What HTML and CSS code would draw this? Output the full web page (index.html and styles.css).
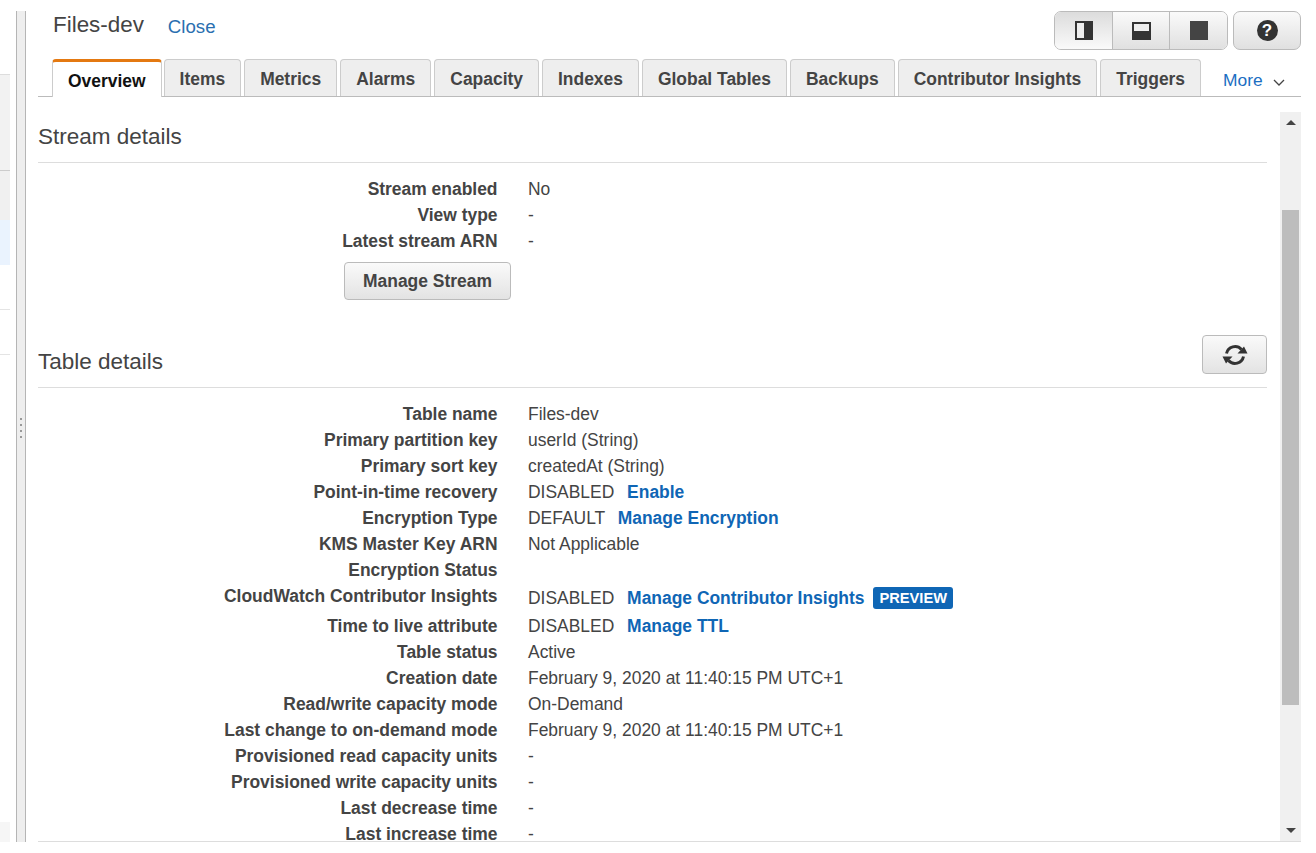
FILE: index.html
```html
<!DOCTYPE html>
<html lang="en">
<head>
  <meta charset="UTF-8" />
  <meta name="viewport" content="width=device-width, initial-scale=1" />
  <title>Files-dev</title>
  <link rel="stylesheet" href="styles.css">
</head>
<body>

<div class="page">
  <div class="sidebar">
    <div class="side-a"></div>
    <div class="side-b"></div>
    <div class="side-c"></div>
    <div class="side-d"></div>
    <div class="side-d"></div>
    <div class="side-e"></div>
  </div>

  <div class="splitter">
    <div class="grip"><i></i><i></i><i></i><i></i></div>
  </div>

  <div class="main">
    <div class="top">
      <div class="title">Files-dev</div>
      <a class="close">Close</a>
      <div class="top-btns">
        <div class="seg">
          <div class="seg-btn active">
            <svg width="18" height="19" viewBox="0 0 18 19"><rect width="18" height="19" fill="#333"/><rect x="2" y="2" width="7" height="15" fill="#eee"/></svg>
          </div>
          <div class="seg-btn">
            <svg width="19" height="18" viewBox="0 0 19 18"><rect width="19" height="18" fill="#333"/><rect x="2" y="2" width="15" height="7" fill="#eee"/></svg>
          </div>
          <div class="seg-btn">
            <svg width="18" height="19" viewBox="0 0 18 19"><rect width="18" height="19" fill="#444"/></svg>
          </div>
        </div>
        <div class="help-btn"><span class="help">?</span></div>
      </div>
    </div>

    <div class="tabs">
      <div class="tab active">Overview</div>
      <div class="tab">Items</div>
      <div class="tab">Metrics</div>
      <div class="tab">Alarms</div>
      <div class="tab">Capacity</div>
      <div class="tab">Indexes</div>
      <div class="tab">Global Tables</div>
      <div class="tab">Backups</div>
      <div class="tab">Contributor Insights</div>
      <div class="tab">Triggers</div>
      <div class="more">More
        <svg width="12" height="7" viewBox="0 0 12 7"><path d="M1 1l5 5 5-5" fill="none" stroke="#444" stroke-width="1.3"/></svg>
      </div>
    </div>

    <div class="body">
      <div class="content">
        <div class="section-head"><h2>Stream details</h2></div>
        <div class="rows">
          <div class="row"><div class="label">Stream enabled</div><div class="value">No</div></div>
          <div class="row"><div class="label">View type</div><div class="value">-</div></div>
          <div class="row"><div class="label">Latest stream ARN</div><div class="value">-</div></div>
        </div>
        <div class="btn-row"><div class="btn">Manage Stream</div></div>

        <div class="section-head table-head">
          <h2>Table details</h2>
          <div class="refresh">
            <svg width="26" height="26" viewBox="0 0 26 26">
              <path d="M4.500 11.500A8.700 8.700 0 0 1 19.500 7.500" fill="none" stroke="#333" stroke-width="3"/>
              <path d="M15.500 11.500h10l-3.500-7z" fill="#333"/>
              <path d="M21.500 14.500A8.700 8.700 0 0 1 6.500 18.500" fill="none" stroke="#333" stroke-width="3"/>
              <path d="M0.500 14.500h10l-6.500 7z" fill="#333"/>
            </svg>
          </div>
        </div>
        <div class="rows">
          <div class="row"><div class="label">Table name</div><div class="value">Files-dev</div></div>
          <div class="row"><div class="label">Primary partition key</div><div class="value">userId (String)</div></div>
          <div class="row"><div class="label">Primary sort key</div><div class="value">createdAt (String)</div></div>
          <div class="row"><div class="label">Point-in-time recovery</div><div class="value">DISABLED <a class="link">Enable</a></div></div>
          <div class="row"><div class="label">Encryption Type</div><div class="value">DEFAULT <a class="link">Manage Encryption</a></div></div>
          <div class="row"><div class="label">KMS Master Key ARN</div><div class="value">Not Applicable</div></div>
          <div class="row"><div class="label">Encryption Status</div><div class="value"></div></div>
          <div class="row tall"><div class="label">CloudWatch Contributor Insights</div><div class="value">DISABLED <a class="link">Manage Contributor Insights</a><span class="badge">PREVIEW</span></div></div>
          <div class="row"><div class="label">Time to live attribute</div><div class="value">DISABLED <a class="link">Manage TTL</a></div></div>
          <div class="row"><div class="label">Table status</div><div class="value">Active</div></div>
          <div class="row"><div class="label">Creation date</div><div class="value">February 9, 2020 at 11:40:15 PM UTC+1</div></div>
          <div class="row"><div class="label">Read/write capacity mode</div><div class="value">On-Demand</div></div>
          <div class="row"><div class="label">Last change to on-demand mode</div><div class="value">February 9, 2020 at 11:40:15 PM UTC+1</div></div>
          <div class="row"><div class="label">Provisioned read capacity units</div><div class="value">-</div></div>
          <div class="row"><div class="label">Provisioned write capacity units</div><div class="value">-</div></div>
          <div class="row"><div class="label">Last decrease time</div><div class="value">-</div></div>
          <div class="row"><div class="label">Last increase time</div><div class="value">-</div></div>
        </div>
      </div>

      <div class="scrollbar">
        <div class="arrow-up"></div>
        <div class="thumb"></div>
        <div class="arrow-down"></div>
      </div>
    </div>
  </div>
</div>

</body>
</html>
```

FILE: styles.css
```css
html, body {
  margin: 0;
  height: 100%;
  background: white;
  overflow: hidden;
}
body {
  font-family: "Liberation Sans", Arial, sans-serif;
  font-size: 16px;
  color: #444;
}
.page {
  display: flex;
  height: 853px;
}

/* what is left of the table list on the left */
.sidebar {
  width: 10px;
  margin-right: 6px;
  padding-top: 74px;
  box-sizing: border-box;
  display: flex;
  flex-direction: column;
  height: 842px;
}
.side-a {
  height: 96px;
  background: #f2f2f2;
  border-top: 1px solid #ddd;
  box-sizing: border-box;
}
.side-b {
  height: 50px;
  background: #f0f0f0;
  border-top: 1px solid #ccc;
  box-sizing: border-box;
}
.side-c {
  height: 45px;
  background: #eaf3fe;
}
.side-d {
  height: 45px;
  border-bottom: 1px solid #e4e4e4;
  box-sizing: border-box;
}
.side-e {
  height: 20px;
  margin-top: auto;
  background: #f6f6f6;
}

.splitter {
  width: 10px;
  box-sizing: border-box;
  margin-top: 11px;
  height: 831px;
  background: #eee;
  border-left: 1px solid #b5b5b5;
  border-right: 1px solid #b5b5b5;
  display: flex;
  align-items: center;
  justify-content: center;
}
.grip {
  display: flex;
  flex-direction: column;
  gap: 4px;
  margin-bottom: -2px;
}
.grip i {
  display: block;
  width: 2px;
  height: 2px;
  background: #999;
}

.main {
  width: 1275px;
  box-sizing: border-box;
  padding-left: 12px;
  display: flex;
  flex-direction: column;
  height: 842px;
}

.top {
  height: 59px;
  padding-left: 15px;
  display: flex;
  align-items: flex-start;
}
.title {
  font-size: 22.4px;
  line-height: 26px;
  margin-top: 12px;
  color: #444;
}
.close {
  font-size: 18.67px;
  line-height: 22px;
  margin-top: 16px;
  margin-left: 24px;
  color: #2a6fb0;
}
.top-btns {
  margin-left: auto;
  margin-top: 11px;
  display: flex;
  gap: 5px;
}
.seg {
  display: flex;
  border: 1px solid #bbb;
  border-radius: 7px;
  overflow: hidden;
}
.seg-btn {
  width: 57px;
  height: 37px;
  display: flex;
  align-items: center;
  justify-content: center;
  background: linear-gradient(#fafafa, #e0e0e0);
  border-left: 1px solid #bbb;
}
.seg-btn:first-child {
  border-left: none;
}
.seg-btn:nth-child(2) {
  width: 56px;
}
.seg-btn.active {
  background: linear-gradient(#dcdcdc, #fafafa);
}
.help-btn {
  width: 66px;
  height: 37px;
  border: 1px solid #bbb;
  border-radius: 7px;
  background: linear-gradient(#fafafa, #e0e0e0);
  display: flex;
  align-items: center;
  justify-content: center;
}
.help {
  width: 21px;
  height: 21px;
  border-radius: 50%;
  background: #333;
  color: white;
  font-weight: bold;
  font-size: 17px;
  line-height: 21px;
  text-align: center;
}

.tabs {
  display: flex;
  height: 38px;
  box-sizing: border-box;
  padding-left: 14px;
  border-bottom: 1px solid #bbb;
  gap: 3px;
}
.tab {
  padding: 0 15px;
  height: 37px;
  box-sizing: border-box;
  font-size: 17.45px;
  font-weight: bold;
  line-height: 38px;
  white-space: nowrap;
  color: #444;
  background: #eee;
  border: 1px solid #ccc;
  border-bottom: none;
  border-radius: 4px 4px 0 0;
}
.tab.active {
  height: 38px;
  background: white;
  color: #111;
  border-top: 3px solid #e47911;
  line-height: 38px;
  margin-right: -1px;
  position: relative;
  z-index: 1;
}
.more {
  margin-left: 19px;
  font-size: 17.4px;
  line-height: 42px;
  white-space: nowrap;
  color: #1b6ec2;
}
.more svg {
  margin-left: 5px;
}

.body {
  flex: 1;
  min-height: 0;
  margin-top: 15px;
  display: flex;
  border-bottom: 1px solid #ddd;
}
.content {
  flex: 1;
  min-width: 0;
  margin-right: 13px;
  overflow: hidden;
}
.section-head {
  display: flex;
  justify-content: space-between;
  align-items: flex-end;
  border-bottom: 1px solid #ddd;
  margin-top: 11px;
}
.section-head h2 {
  margin: 0 0 12px 0;
  font-size: 22.5px;
  line-height: 27px;
  font-weight: normal;
  color: #444;
}
.table-head {
  margin-top: 35px;
}
.refresh {
  width: 65px;
  height: 39px;
  box-sizing: border-box;
  margin-bottom: 13px;
  border: 1px solid #bbb;
  border-radius: 4px;
  background: linear-gradient(#fafafa, #e3e3e3);
  display: flex;
  align-items: center;
  justify-content: center;
}
.rows {
  margin-top: 13px;
}
.row {
  display: grid;
  grid-template-columns: 459.5px 1fr;
  column-gap: 30.5px;
  line-height: 26px;
  height: 26px;
}
.row.tall {
  height: 30px;
}
.row.tall .value {
  padding-top: 2px;
}
.label {
  font-size: 17.45px;
  font-weight: bold;
  text-align: right;
  color: #444;
}
.value {
  font-size: 17.45px;
  color: #444;
}
.link {
  font-weight: bold;
  color: #0f66b5;
  margin-left: 8px;
}
.badge {
  display: inline-block;
  margin-left: 9px;
  padding: 0 6px;
  background: #0f66b5;
  color: white;
  font-size: 14.67px;
  font-weight: bold;
  line-height: 22px;
  border-radius: 3px;
  vertical-align: 1px;
}
.btn-row {
  margin-top: 8px;
  padding-left: 306px;
}
.btn {
  width: 167px;
  height: 38px;
  box-sizing: border-box;
  border: 1px solid #bbb;
  border-radius: 4px;
  background: linear-gradient(#fafafa, #e3e3e3);
  font-size: 17.45px;
  font-weight: bold;
  line-height: 36px;
  text-align: center;
  color: #444;
}

.scrollbar {
  width: 21px;
  background: #f0f0f0;
  display: flex;
  flex-direction: column;
  align-items: center;
}
.arrow-up {
  width: 0;
  height: 0;
  margin-top: 8px;
  border-left: 5px solid transparent;
  border-right: 5px solid transparent;
  border-bottom: 5px solid #444;
}
.thumb {
  width: 17px;
  height: 495px;
  margin-top: 85px;
  background: #bdbdbd;
}
.arrow-down {
  width: 0;
  height: 0;
  margin-top: auto;
  margin-bottom: 8px;
  border-left: 5px solid transparent;
  border-right: 5px solid transparent;
  border-top: 5px solid #444;
}
```
